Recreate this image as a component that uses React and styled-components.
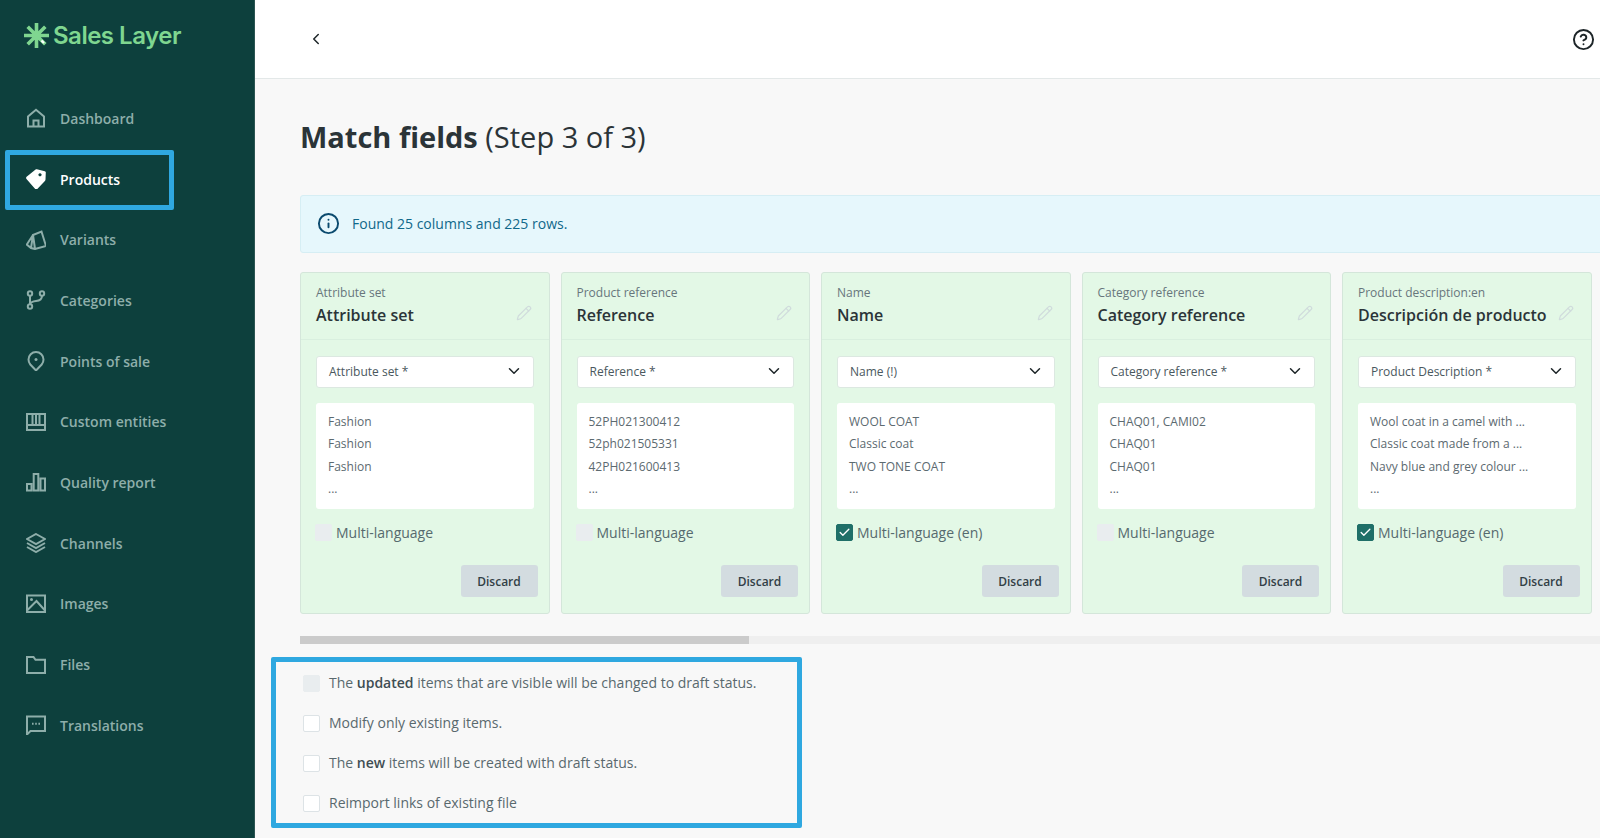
import React from 'react';
import styled, { createGlobalStyle } from 'styled-components';
import { ChevronLeft, ChevronDown, CircleHelp, Info, Pencil, Check } from 'lucide-react';

const GlobalStyle = createGlobalStyle`
  html, body {
    margin: 0;
    height: 100%;
    overflow: hidden;
    font-family: 'Open Sans', 'Liberation Sans', sans-serif;
  }
  #root { height: 100%; }
  * { box-sizing: border-box; }
`;

const Page = styled.div`
  display: flex;
  width: 1600px;
  height: 838px;
  overflow: hidden;
  background: #f8f8f8;
`;

const Sidebar = styled.aside`
  flex: 0 0 255px;
  background: #0d403d;
  border-right: 1px solid #2c5552;
`;

const Logo = styled.div`
  display: flex;
  align-items: center;
  gap: 4px;
  height: 88px;
  padding: 0 0 18px 24px;
`;

const LogoText = styled.span`
  font-family: Inter, 'Liberation Sans', sans-serif;
  font-size: 24px;
  font-weight: 600;
  letter-spacing: -0.5px;
  color: #7fd690;
`;

const Nav = styled.nav`
  display: flex;
  flex-direction: column;
`;

const NavItem = styled.a`
  position: relative;
  display: flex;
  align-items: center;
  gap: 14px;
  height: 60.7px;
  padding-left: 26px;
  font-size: 14px;
  font-weight: 600;
  color: ${(props) => (props.$active ? '#ffffff' : '#8eaeaa')};
`;

const NavIcon = styled.svg`
  flex: none;
  width: 20px;
  height: 20px;
  fill: none;
  stroke: #8eaeaa;
  stroke-width: 2;
`;

const Highlight = styled.span`
  position: absolute;
  left: 5px;
  top: 1px;
  width: 169px;
  height: 60px;
  border: 5px solid #2fa8e0;
  border-radius: 2px;
`;

const Main = styled.main`
  flex: 1;
  min-width: 0;
  position: relative;
  overflow: hidden;
`;

const TopBar = styled.header`
  display: flex;
  align-items: center;
  justify-content: space-between;
  height: 79px;
  padding: 0 5px 0 52px;
  background: #ffffff;
  border-bottom: 1px solid #e3e8e8;
`;

const Content = styled.div`
  padding: 0 0 0 45px;
`;

const Title = styled.h1`
  margin: 37px 0 37px;
  font-size: 29px;
  line-height: 42px;
  font-weight: 400;
  color: #2b3438;
  strong { font-weight: 700; }
`;

const InfoBox = styled.div`
  display: flex;
  align-items: center;
  gap: 12px;
  width: 1320px;
  height: 58px;
  padding: 0 0 2px 16px;
  background: #e6f7fc;
  border: 1px solid #d6eef4;
  border-radius: 3px;
  font-size: 14px;
  color: #10688a;
`;

const Cards = styled.div`
  display: flex;
  gap: 11px;
  margin-top: 19px;
  width: 1400px;
`;

const Card = styled.section`
  flex: 0 0 249.5px;
  height: 342px;
  background: #e3f8e6;
  border: 1px solid #d4e6da;
  border-radius: 3px;
`;

const CardHead = styled.div`
  position: relative;
  height: 67px;
  padding: 11px 15px 0;
  border-bottom: 1px solid #d9efdf;
`;

const CardSub = styled.div`
  font-size: 12px;
  line-height: 17px;
  color: #67767c;
`;

const CardName = styled.div`
  margin-top: 2px;
  font-size: 16px;
  line-height: 24px;
  font-weight: 600;
  color: #2b3438;
  white-space: nowrap;
`;

const EditIcon = styled.span`
  position: absolute;
  right: 17px;
  top: 32px;
  display: flex;
  color: #d0dcdc;
`;

const CardBody = styled.div`
  display: flex;
  flex-direction: column;
  padding: 16px 15px 0;
`;

const Select = styled.div`
  display: flex;
  align-items: center;
  justify-content: space-between;
  height: 32px;
  padding: 0 10px 2px 12px;
  background: #ffffff;
  border: 1px solid #dce8e1;
  border-radius: 3px;
  font-size: 12px;
  color: #4a585e;
`;

const Preview = styled.div`
  height: 106px;
  margin-top: 15px;
  padding: 8px 12px;
  background: #ffffff;
  border-radius: 3px;
  font-size: 12px;
  line-height: 22.3px;
  color: #5c6a70;
`;

const MultiRow = styled.label`
  display: flex;
  align-items: center;
  gap: 4px;
  height: 17px;
  margin: 15px 0 0 -1px;
  font-size: 14px;
  color: #566a6e;
`;

const Box = styled.span`
  flex: none;
  display: flex;
  align-items: center;
  justify-content: center;
  width: 17px;
  height: 17px;
  border-radius: 2px;
  background: ${(props) =>
    props.$state === 'checked' ? '#1f6f68' : props.$state === 'disabled' ? '#e9edef' : '#ffffff'};
  border: 1px solid ${(props) =>
    props.$state === 'checked' ? '#1f6f68' : props.$state === 'disabled' ? '#e9edef' : '#dde3e6'};
  color: #ffffff;
`;

const Discard = styled.button`
  align-self: flex-end;
  width: 77px;
  height: 32px;
  margin: 24px -4px 0 0;
  border: none;
  border-radius: 3px;
  background: #d3dce0;
  font-family: inherit;
  font-size: 12px;
  font-weight: 600;
  color: #323f46;
`;

const ScrollTrack = styled.div`
  width: 1320px;
  height: 8px;
  margin-top: 22px;
  background: #efefef;
`;

const ScrollThumb = styled.div`
  width: 449px;
  height: 100%;
  background: #cbcbcb;
`;

const Options = styled.div`
  position: relative;
  display: flex;
  flex-direction: column;
  gap: 22.9px;
  margin-top: 31px;
  padding-left: 3px;
`;

const OptionRow = styled.label`
  display: flex;
  align-items: center;
  gap: 9px;
  height: 17px;
  font-size: 14px;
  color: #59696e;
  b { font-weight: 600; color: #3f4e53; }
`;

const OptionText = styled.span`
  margin-top: -2px;
`;

const OptionsFrame = styled.span`
  position: absolute;
  left: -29px;
  top: -18px;
  width: 531px;
  height: 171px;
  border: 5px solid #2fa8e0;
  border-radius: 2px;
`;

const navItems = [
  {
    label: 'Dashboard',
    icon: <path d="M2 18.500V8.500L10 1.800l8 6.700v10zM7.500 18.500V12.500h5v6" />,
  },
  {
    label: 'Products',
    active: true,
    icon: (
      <path
        d="M.6 7.800 9.600.6c.4-.3.8-.4 1.300-.3l7.900 1.900c.6.1 1 .6 1 1.200l-.3 7.200c0 .5-.2.9-.6 1.300l-7.600 8c-.6.6-1.500.6-2.100 0L.5 9.900c-.6-.6-.5-1.600.1-2.100zM14 4.200a1.600 1.600 0 1 0 .01 0z"
        fill="#ffffff"
        stroke="none"
        fillRule="evenodd"
      />
    ),
  },
  {
    label: 'Variants',
    icon: <path d="M7 5 15.500 1.500 20 16l-11 3zM7 5 .8 14.500 5 18l4 1M7 5 5 18M10 7.500h.01" />,
  },
  {
    label: 'Categories',
    icon: (
      <>
        <circle cx="4" cy="3.500" r="2.200" />
        <circle cx="4" cy="16.500" r="2.200" />
        <circle cx="16" cy="3.500" r="2.200" />
        <path d="M4 5.700v8.600M16 5.700c0 4-3 5-6 5.300-3 .300-5 1-6 3" />
      </>
    ),
  },
  {
    label: 'Points of sale',
    icon: (
      <>
        <path d="M10 19.500 4.300 13.500A8 8 0 0 1 2.500 8.500a7.500 7.500 0 0 1 15 0 8 8 0 0 1-1.800 5z" />
        <circle cx="10" cy="8.500" r="1.500" fill="#8eaeaa" stroke="none" />
      </>
    ),
  },
  {
    label: 'Custom entities',
    icon: <path d="M1 2h18v16H1zM1 13h18M6.500 2v11M10 2v11M13.500 2v11" />,
  },
  {
    label: 'Quality report',
    icon: <path d="M1 12h4.500v6.500H1zM7.700 2h4.600v16.500H7.700zM14.500 6.500H19v12h-4.500z" />,
  },
  {
    label: 'Channels',
    icon: <path d="M10 1 19 6l-9 5-9-5zM1 10l9 5 9-5M1 14l9 5 9-5" />,
  },
  {
    label: 'Images',
    icon: (
      <>
        <path d="M1 1.500h18v16.500H1zM1 16.500 10.500 7l8.500 9.500" />
        <circle cx="5.500" cy="5.500" r="1.500" fill="#8eaeaa" stroke="none" />
      </>
    ),
  },
  {
    label: 'Files',
    icon: <path d="M1 18V2h6.500l2 2.800H19V18z" />,
  },
  {
    label: 'Translations',
    icon: (
      <>
        <path d="M1 19.500V1.500h18v14.500H4.500z" />
        <path d="M6 8.800h1.600M9.200 8.800h1.600M12.400 8.800H14" />
      </>
    ),
  },
];

const cards = [
  {
    sub: 'Attribute set',
    name: 'Attribute set',
    select: 'Attribute set *',
    lines: ['Fashion', 'Fashion', 'Fashion'],
    multi: false,
  },
  {
    sub: 'Product reference',
    name: 'Reference',
    select: 'Reference *',
    lines: ['52PH021300412', '52ph021505331', '42PH021600413'],
    multi: false,
  },
  {
    sub: 'Name',
    name: 'Name',
    select: 'Name (!)',
    lines: ['WOOL COAT', 'Classic coat', 'TWO TONE COAT'],
    multi: true,
  },
  {
    sub: 'Category reference',
    name: 'Category reference',
    select: 'Category reference *',
    lines: ['CHAQ01, CAMI02', 'CHAQ01', 'CHAQ01'],
    multi: false,
  },
  {
    sub: 'Product description:en',
    name: 'Descripción de producto',
    select: 'Product Description *',
    lines: ['Wool coat in a camel with ...', 'Classic coat made from a ...', 'Navy blue and grey colour ...'],
    multi: true,
  },
];

const SalesLayerMark = () => (
  <svg width="25" height="25" viewBox="0 0 25 25" fill="none">
    <path
      d="M12.500 0v25M0 12.500h25M3.700 3.700l17.600 17.600M21.300 3.700 3.700 21.300"
      stroke="#7fd690"
      strokeWidth="3.600"
    />
    <path d="M17.500 17.500l2.500 2.500" stroke="#ffffff" strokeWidth="2.200" />
  </svg>
);

const App = () => {
  return (
    <Page>
      <GlobalStyle />
      <Sidebar>
        <Logo>
          <SalesLayerMark />
          <LogoText>Sales Layer</LogoText>
        </Logo>
        <Nav>
          {navItems.map((item) => (
            <NavItem key={item.label} $active={item.active}>
              <NavIcon viewBox="0 0 20 20">{item.icon}</NavIcon>
              {item.label}
              {item.active && <Highlight />}
            </NavItem>
          ))}
        </Nav>
      </Sidebar>

      <Main>
        <TopBar>
          <ChevronLeft size={18} color="#1d2528" strokeWidth={2} />
          <CircleHelp size={23} color="#1d2528" strokeWidth={2} />
        </TopBar>
        <Content>
          <Title>
            <strong>Match fields</strong> (Step 3 of 3)
          </Title>

          <InfoBox>
            <Info size={23} color="#0b4a6e" strokeWidth={2} />
            Found 25 columns and 225 rows.
          </InfoBox>

          <Cards>
            {cards.map((card) => (
              <Card key={card.name}>
                <CardHead>
                  <CardSub>{card.sub}</CardSub>
                  <CardName>{card.name}</CardName>
                  <EditIcon>
                    <Pencil size={16} strokeWidth={1.8} />
                  </EditIcon>
                </CardHead>
                <CardBody>
                  <Select>
                    {card.select}
                    <ChevronDown size={18} color="#1d2528" strokeWidth={2} />
                  </Select>
                  <Preview>
                    {card.lines.map((line) => (
                      <div key={line + card.name}>{line}</div>
                    ))}
                    <div>...</div>
                  </Preview>
                  <MultiRow>
                    <Box $state={card.multi ? 'checked' : 'disabled'}>
                      {card.multi && <Check size={13} strokeWidth={2.5} />}
                    </Box>
                    {card.multi ? 'Multi-language (en)' : 'Multi-language'}
                  </MultiRow>
                  <Discard>Discard</Discard>
                </CardBody>
              </Card>
            ))}
          </Cards>

          <ScrollTrack>
            <ScrollThumb />
          </ScrollTrack>

          <Options>
            <OptionsFrame />
            <OptionRow>
              <Box $state="disabled" />
              <OptionText>The <b>updated</b> items that are visible will be changed to draft status.</OptionText>
            </OptionRow>
            <OptionRow>
              <Box />
              <OptionText>Modify only existing items.</OptionText>
            </OptionRow>
            <OptionRow>
              <Box />
              <OptionText>The <b>new</b> items will be created with draft status.</OptionText>
            </OptionRow>
            <OptionRow>
              <Box />
              <OptionText>Reimport links of existing file</OptionText>
            </OptionRow>
          </Options>
        </Content>
      </Main>
    </Page>
  );
};

export default App;
